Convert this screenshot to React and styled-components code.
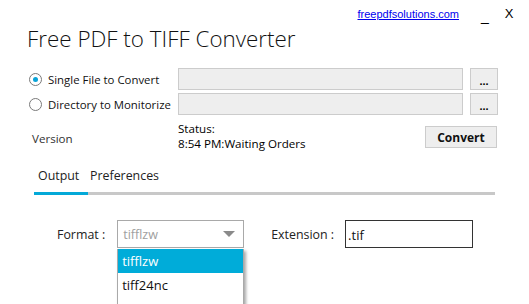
import React from "react";
import styled, { createGlobalStyle } from "styled-components";

const GlobalStyle = createGlobalStyle`
  html, body {
    margin: 0;
    padding: 0;
    background: #ffffff;
  }
  body {
    font-family: "Open Sans", "Noto Sans", sans-serif;
    color: #000;
  }
`;

const Window = styled.div`
  width: 529px;
  height: 304px;
  overflow: hidden;
  position: relative;
  background: #fff;
`;

const TopBar = styled.div`
  display: flex;
  justify-content: flex-end;
  align-items: center;
  height: 24px;
  padding: 4px 14px 0 0;
  box-sizing: border-box;
`;

const SiteLink = styled.a`
  font-family: "Liberation Sans", Arial, sans-serif;
  font-size: 11px;
  color: #0000ee;
  text-decoration: underline;
  margin-right: 20px;
`;

const WinButton = styled.span`
  font-family: "Liberation Sans", Arial, sans-serif;
  font-size: ${(p) => p.size || 14}px;
  line-height: 14px;
  color: #000;
  width: 12px;
  text-align: center;
  margin-left: ${(p) => p.gap || 0}px;
  position: relative;
  top: ${(p) => p.shift || 0}px;
`;

const Title = styled.h1`
  margin: 0;
  padding-left: 27px;
  font-size: 22.4px;
  font-weight: 300;
  line-height: 30px;
  color: #111;
`;

const Sources = styled.div`
  display: grid;
  grid-template-columns: 142px 285px 28px;
  column-gap: 7px;
  row-gap: 3px;
  padding: 14px 0 0 29px;
`;

const RadioLabel = styled.label`
  display: flex;
  align-items: center;
  gap: 6px;
  font-size: 11.4px;
  color: #111;
  white-space: nowrap;
`;

const RadioCircle = styled.span`
  width: 11px;
  height: 11px;
  border: 1px solid #7a7a7a;
  border-radius: 50%;
  display: flex;
  align-items: center;
  justify-content: center;
  background: #fff;

  &::after {
    content: "";
    width: 5px;
    height: 5px;
    border-radius: 50%;
    background: ${(p) => (p.checked ? "#0aa3d7" : "transparent")};
  }
`;

const PathField = styled.div`
  height: 22px;
  box-sizing: border-box;
  background: #eeeeee;
  border: 1px solid #cccccc;
`;

const Browse = styled.div`
  height: 22px;
  box-sizing: border-box;
  background: #eeeeee;
  border: 1px solid #cccccc;
  display: flex;
  align-items: flex-end;
  justify-content: center;
  font-family: "Liberation Sans", Arial, sans-serif;
  font-size: 11px;
  font-weight: bold;
  line-height: 16px;
  color: #000;
`;

const StatusRow = styled.div`
  display: grid;
  grid-template-columns: 146px 247px 72px;
  align-items: center;
  padding: 8px 0 0 32px;
`;

const Muted = styled.div`
  font-size: 11.6px;
  color: #333;
  padding-top: 2px;
`;

const StatusText = styled.div`
  font-size: 11.6px;
  line-height: 15px;
  color: #000;
  margin-top: -2px;
`;

const ConvertButton = styled.button`
  height: 22px;
  width: 72px;
  box-sizing: border-box;
  background: #eeeeee;
  border: 1px solid #cccccc;
  font-family: "Open Sans", "Noto Sans", sans-serif;
  font-weight: 700;
  font-size: 12px;
  color: #111;
  padding: 0;
`;

const Tabs = styled.div`
  display: flex;
  margin: 16px 34px 0 34px;
  border-bottom: 3px solid #c8c8c8;
`;

const Tab = styled.div`
  font-size: 12.4px;
  color: #222;
  padding: 0 0 8px ${(p) => (p.active ? 4 : 2)}px;
  margin-bottom: -3px;
  border-bottom: 3px solid ${(p) => (p.active ? "#04a9d8" : "transparent")};
  box-sizing: border-box;
  width: ${(p) => (p.w ? `${p.w}px` : "auto")};
`;

const FormRow = styled.div`
  display: flex;
  align-items: center;
  padding: 25px 0 0 57px;
`;

const FieldLabel = styled.span`
  font-size: 12.4px;
  color: #222;
  margin-right: ${(p) => p.gap}px;
`;

const SelectWrap = styled.div`
  position: relative;
  width: 127px;
  margin-right: 27px;
`;

const SelectBox = styled.div`
  height: 28px;
  box-sizing: border-box;
  border: 1px solid #a9a9a9;
  display: flex;
  align-items: center;
  justify-content: space-between;
  padding: 0 8px 0 5px;
  font-size: 12.5px;
  color: #a0a0a0;
`;

const Arrow = styled.span`
  width: 0;
  height: 0;
  border-left: 6px solid transparent;
  border-right: 6px solid transparent;
  border-top: 6px solid #8a8a8a;
`;

const DropList = styled.div`
  position: absolute;
  top: 29px;
  left: 0;
  width: 127px;
  background: #fff;
  border: 1px solid #a9a9a9;
  border-top: none;
  box-sizing: border-box;
  box-shadow: 2px 2px 3px rgba(0, 0, 0, 0.35);
`;

const Option = styled.div`
  height: 24px;
  display: flex;
  align-items: center;
  padding-left: 4px;
  font-size: 13px;
  background: ${(p) => (p.selected ? "#00acd9" : "#fff")};
  color: ${(p) => (p.selected ? "#fff" : "#111")};
`;

const ExtInput = styled.div`
  width: 128px;
  height: 28px;
  box-sizing: border-box;
  border: 1px solid #333;
  display: flex;
  align-items: center;
  padding: 2px 0 0 2px;
  font-size: 13px;
  color: #111;
`;

export default function App() {
  return (
    <Window>
      <GlobalStyle />
      <TopBar>
        <SiteLink href="#">freepdfsolutions.com</SiteLink>
        <WinButton shift={2}>_</WinButton>
        <WinButton gap={12} size={13}>X</WinButton>
      </TopBar>
      <Title>Free PDF to TIFF Converter</Title>

      <Sources>
        <RadioLabel>
          <RadioCircle checked />
          Single File to Convert
        </RadioLabel>
        <PathField />
        <Browse>...</Browse>
        <RadioLabel>
          <RadioCircle />
          Directory to Monitorize
        </RadioLabel>
        <PathField />
        <Browse>...</Browse>
      </Sources>

      <StatusRow>
        <Muted>Version</Muted>
        <StatusText>
          Status:
          <br />
          8:54 PM:Waiting Orders
        </StatusText>
        <ConvertButton>Convert</ConvertButton>
      </StatusRow>

      <Tabs>
        <Tab active w={54}>Output</Tab>
        <Tab>Preferences</Tab>
      </Tabs>

      <FormRow>
        <FieldLabel gap={12}>Format :</FieldLabel>
        <SelectWrap>
          <SelectBox>
            tifflzw
            <Arrow />
          </SelectBox>
          <DropList>
            <Option selected>tifflzw</Option>
            <Option>tiff24nc</Option>
            <Option />
          </DropList>
        </SelectWrap>
        <FieldLabel gap={11}>Extension :</FieldLabel>
        <ExtInput>.tif</ExtInput>
      </FormRow>
    </Window>
  );
}
